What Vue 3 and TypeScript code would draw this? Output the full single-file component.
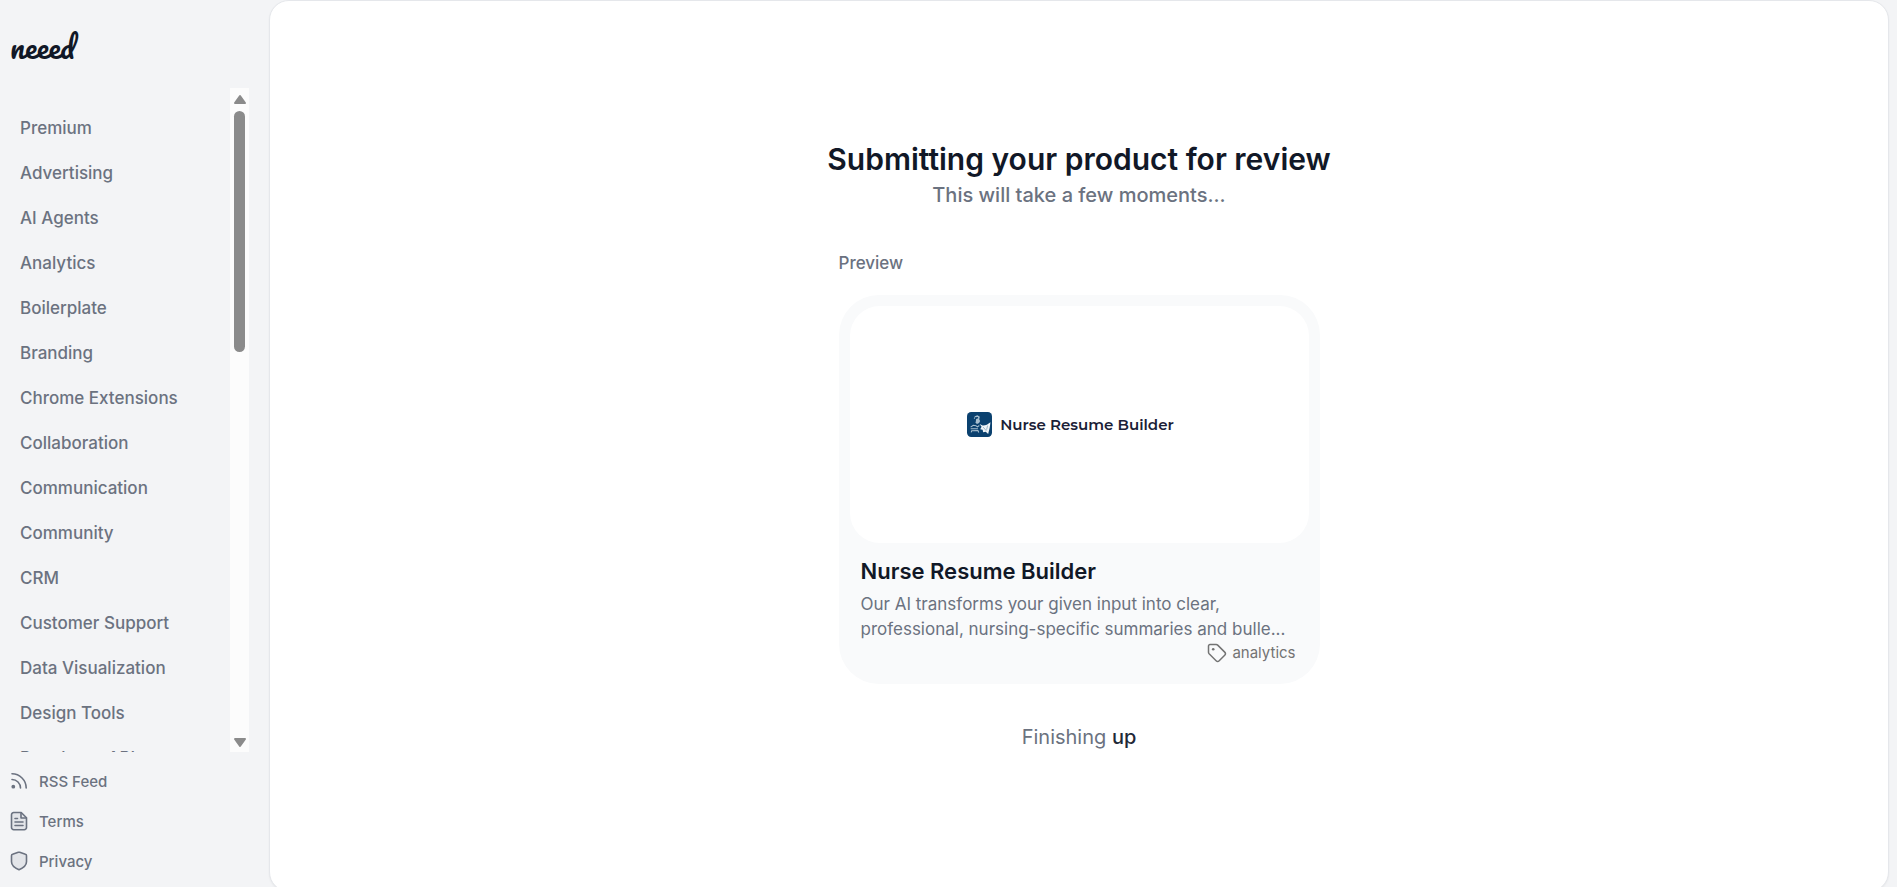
<script setup lang="ts">
interface FooterLink {
  label: string
  icon: 'rss' | 'file' | 'shield'
}

const categories: string[] = [
  'Premium',
  'Advertising',
  'AI Agents',
  'Analytics',
  'Boilerplate',
  'Branding',
  'Chrome Extensions',
  'Collaboration',
  'Communication',
  'Community',
  'CRM',
  'Customer Support',
  'Data Visualization',
  'Design Tools',
  'Developer APIs',
]

const footerLinks: FooterLink[] = [
  { label: 'RSS Feed', icon: 'rss' },
  { label: 'Terms', icon: 'file' },
  { label: 'Privacy', icon: 'shield' },
]
</script>

<template>
  <div class="shell">
    <aside class="sidebar">
      <a class="brand" href="#">neeed</a>
      <div class="scroller">
        <nav class="categories" aria-label="Categories">
          <a v-for="name in categories" :key="name" class="category" href="#">{{ name }}</a>
        </nav>
        <div class="scrollbar" aria-hidden="true">
          <svg class="arrow" viewBox="0 0 14 12"><path d="M7 3 12 10H2z" /></svg>
          <div class="track"><div class="thumb"></div></div>
          <svg class="arrow" viewBox="0 0 14 12"><path d="M7 10 2 3h10z" /></svg>
        </div>
      </div>
      <nav class="footer" aria-label="Site">
        <a v-for="link in footerLinks" :key="link.label" class="footer-link" href="#">
          <svg v-if="link.icon === 'rss'" class="icon" viewBox="0 0 18 18">
            <path d="M2 1.800C9.800 1.800 16.200 8.200 16.200 16M2 7.500c4.700 0 8.500 3.800 8.500 8.500" />
            <circle class="dot" cx="3.300" cy="14.700" r="1.900" />
          </svg>
          <svg v-else-if="link.icon === 'file'" class="icon" viewBox="0 0 18 20">
            <path
              class="tinted"
              d="M4 1.500h7.200l5.300 5.300V16.500a2.200 2.200 0 0 1-2.200 2.200H3.700a2.200 2.200 0 0 1-2.200-2.200V3.700A2.200 2.200 0 0 1 4 1.500z"
            />
            <path d="M11 1.700V7h5.300M5 7.500h2.500M5 11h8M5 14.500h8" />
          </svg>
          <svg v-else class="icon" viewBox="0 0 18 20">
            <path
              class="tinted"
              d="M8.300 1.300 2.600 3.200a1.500 1.500 0 0 0-1.100 1.500v6.100c0 4.200 4.600 6.700 7.500 7.900 2.900-1.200 7.500-3.700 7.500-7.900V4.700a1.500 1.500 0 0 0-1.100-1.500L9.700 1.300a2.200 2.200 0 0 0-1.400 0z"
            />
          </svg>
          <span>{{ link.label }}</span>
        </a>
      </nav>
    </aside>

    <main class="panel">
      <header class="heading">
        <h1>Submitting your product for review</h1>
        <p>This will take a few moments...</p>
      </header>

      <section class="preview" aria-labelledby="preview-label">
        <h2 id="preview-label">Preview</h2>
        <article class="card">
          <div class="cover">
            <svg class="cover-logo" viewBox="0 0 24 24" aria-hidden="true">
              <rect width="24" height="24" rx="4" fill="#0b416f" />
              <path
                d="M7.500 4 10 3l2.300 1.500-.6 2.500.9 1.600-1 2-2 .8L8 10l.3-3-1.800-.6z"
                fill="#a9c0d0"
              />
              <path d="M7.500 5l3-.3.300 1.400-2 .7-.6 2.800-1 1z" fill="#0b416f" />
              <path
                d="M3.500 14.500l2.500-1.700 2.500.3 1.500 1.200 1.800-1.300M3.500 16h7M4 19.500l.5-1.500 6-.2.800 1.800"
                fill="none"
                stroke="#a9c0d0"
                stroke-width="1"
              />
              <path
                d="M12 11.500l3 1.500c2.800.2 5-1.200 7.500-3.200-.4 3.800-.9 7-2.200 11.200l-2.300-2-2.500.5-.5-2.500-2.300-.5 1.300-2.300z"
                fill="#f0f5f8"
              />
              <path d="M15.500 14.500l3 3.500M19.800 13l-1 4" stroke="#7d9db4" stroke-width=".7" />
            </svg>
            <span>Nurse Resume Builder</span>
          </div>
          <div class="details">
            <h3>Nurse Resume Builder</h3>
            <p>Our AI transforms your given input into clear, professional, nursing-specific summaries and bulle...</p>
            <div class="tag">
              <svg class="tag-icon" viewBox="0 0 20 20" aria-hidden="true">
                <path
                  d="M3 1.500h6.200a2.200 2.200 0 0 1 1.500.6l7 7a2.200 2.200 0 0 1 0 3.100l-5.500 5.500a2.200 2.200 0 0 1-3.100 0l-7-7a2.200 2.200 0 0 1-.6-1.500V3A1.500 1.500 0 0 1 3 1.500z"
                />
                <circle cx="6.200" cy="6.200" r="1.300" />
              </svg>
              <span>analytics</span>
            </div>
          </div>
        </article>
      </section>

      <p class="status" role="status">Finishing <span>up</span></p>
    </main>
  </div>
</template>

<style>
body {
  margin: 0;
  background: #f3f4f6;
}
</style>

<style scoped>
.shell {
  display: grid;
  grid-template-columns: 249px minmax(0, 1fr);
  column-gap: 20px;
  box-sizing: border-box;
  height: 100vh;
  padding-right: 8px;
  overflow: hidden;
  background: #f3f4f6;
  color: #6b7280;
  font-family: Inter, 'Liberation Sans', sans-serif;
}

h1,
h2,
h3,
p {
  margin: 0;
}

a {
  color: inherit;
  text-decoration: none;
}

.sidebar {
  display: flex;
  flex-direction: column;
  min-height: 0;
}

.brand {
  flex: none;
  box-sizing: border-box;
  height: 88px;
  padding: 29px 10px 0;
  color: #111827;
  font-family: Pacifico, Lato, cursive;
  font-size: 30px;
  line-height: 36px;
}

.scroller {
  display: flex;
  flex: 1;
  min-height: 0;
}

.categories {
  flex: 1;
  padding-top: 18px;
  overflow: hidden;
}

.category {
  display: block;
  padding-left: 20px;
  font-size: 17px;
  font-weight: 500;
  line-height: 45px;
}

.scrollbar {
  display: flex;
  flex-direction: column;
  align-items: center;
  box-sizing: border-box;
  width: 19px;
  padding: 5px 0 4px;
  background: #fcfcfc;
}

.arrow {
  flex: none;
  width: 14px;
  height: 12px;
  fill: #8b8b8b;
  stroke: #8b8b8b;
  stroke-width: 2;
  stroke-linejoin: round;
}

.track {
  flex: 1;
  padding: 6px 0;
}

.thumb {
  width: 11px;
  height: 39%;
  border-radius: 6px;
  background: #8b8b8b;
}

.footer {
  flex: none;
  padding: 9px 0 6px;
}

.footer-link {
  display: flex;
  align-items: center;
  gap: 11px;
  height: 40px;
  padding-left: 10px;
  font-size: 15px;
  font-weight: 500;
}

.icon {
  width: 18px;
  height: 20px;
  fill: none;
  stroke: #6b7280;
  stroke-width: 1.6;
  stroke-linecap: round;
  stroke-linejoin: round;
}

.icon .tinted {
  fill: #e3e5e9;
}

.icon .dot {
  fill: #6b7280;
  stroke: none;
}

.panel {
  display: flex;
  flex-direction: column;
  align-items: center;
  box-sizing: border-box;
  margin-bottom: -5px;
  padding-top: 138px;
  border: 1px solid #e5e7eb;
  border-radius: 20px;
  background: #fff;
  box-shadow: 0 1px 2px rgb(0 0 0 / 5%);
}

.heading {
  text-align: center;
}

.heading h1 {
  color: #111827;
  font-size: 30px;
  font-weight: 600;
  line-height: 40px;
}

.heading p {
  margin-top: 1px;
  font-size: 20px;
  font-weight: 500;
  line-height: 30px;
}

.preview {
  width: 481px;
  max-width: 100%;
  margin-top: 40px;
}

.preview h2 {
  font-size: 17px;
  font-weight: 500;
  line-height: 26px;
}

.card {
  box-sizing: border-box;
  margin-top: 19px;
  padding: 11px;
  border-radius: 40px;
  background: #f9fafb;
}

.cover {
  display: flex;
  align-items: center;
  justify-content: center;
  gap: 8px;
  box-sizing: border-box;
  height: 237px;
  padding-right: 17px;
  border-radius: 30px;
  background: #fff;
  color: #1a2036;
  font-family: Montserrat, Inter, sans-serif;
  font-size: 15px;
  font-weight: 600;
}

.cover-logo {
  width: 25px;
  height: 25px;
}

.details {
  padding: 11px 11px 9px;
}

.details h3 {
  color: #111827;
  font-size: 22px;
  font-weight: 600;
  line-height: 35px;
}

.details p {
  margin-top: 3px;
  font-size: 17px;
  line-height: 25px;
}

.tag {
  display: flex;
  align-items: center;
  justify-content: flex-end;
  gap: 5px;
  padding-right: 2px;
  color: #737373;
  font-size: 15px;
  line-height: 22px;
}

.tag-icon {
  width: 20px;
  height: 20px;
  fill: none;
  stroke: #737373;
  stroke-width: 1.5;
  stroke-linejoin: round;
}

.tag-icon circle {
  fill: #737373;
  stroke: none;
}

.status {
  margin-top: 38px;
  font-size: 20px;
  line-height: 30px;
}

.status span {
  color: #1f2937;
  font-weight: 500;
}
</style>
